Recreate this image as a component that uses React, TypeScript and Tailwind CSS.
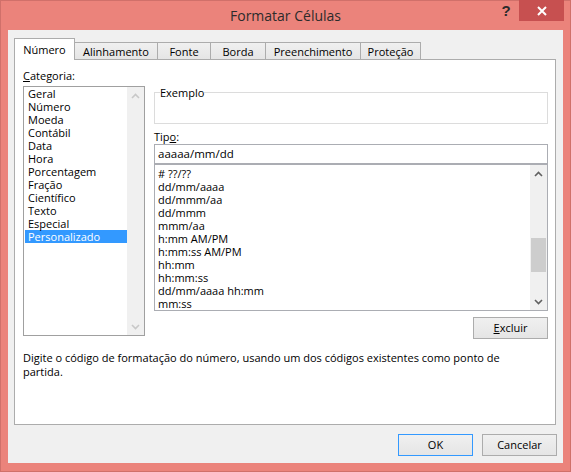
import React from "react";

const CATEGORIES = [
  "Geral",
  "Número",
  "Moeda",
  "Contábil",
  "Data",
  "Hora",
  "Porcentagem",
  "Fração",
  "Científico",
  "Texto",
  "Especial",
  "Personalizado",
];

const FORMATS = [
  "# ??/??",
  "dd/mm/aaaa",
  "dd/mmm/aa",
  "dd/mmm",
  "mmm/aa",
  "h:mm AM/PM",
  "h:mm:ss AM/PM",
  "hh:mm",
  "hh:mm:ss",
  "dd/mm/aaaa hh:mm",
  "mm:ss",
];

const TABS = [
  { label: "Número", w: "w-[61px]" },
  { label: "Alinhamento", w: "w-[84px]" },
  { label: "Fonte", w: "w-[54px]" },
  { label: "Borda", w: "w-[56px]" },
  { label: "Preenchimento", w: "w-[96px]" },
  { label: "Proteção", w: "w-[61px]" },
];

function Chevron({ up, color }: { up?: boolean; color: string }) {
  return (
    <svg width="9" height="6" viewBox="0 0 9 6">
      <polyline
        points={up ? "1,5 4.5,1.5 8,5" : "1,1 4.5,4.5 8,1"}
        fill="none"
        stroke={color}
        strokeWidth="1.6"
      />
    </svg>
  );
}

export default function App() {
  return (
    <div className="relative w-[571px] h-[472px] bg-[#EB837B] border border-[#D0706A] font-['Open_Sans',sans-serif] text-[11px] text-black">
      {/* Title bar */}
      <div className="h-[29px] flex items-center justify-center">
        <span className="text-[14px] text-[#2B2B2B] leading-none">Formatar Células</span>
      </div>
      <div className="absolute top-[-1px] right-[6px] flex">
        <div className="w-[26px] h-[21px] flex items-center justify-center text-[15px] font-bold text-[#2B2B2B] leading-none font-['Liberation_Sans',sans-serif]">
          ?
        </div>
        <div className="w-[45px] h-[21px] bg-[#C75050] flex items-center justify-center">
          <svg width="10" height="10" viewBox="0 0 10 10">
            <path d="M1 1 L9 9 M9 1 L1 9" stroke="white" strokeWidth="2" />
          </svg>
        </div>
      </div>

      {/* Client area */}
      <div className="mx-[7px] h-[433px] bg-[#F0F0F0] pl-[6px] pr-[7px] pt-[8px] flex flex-col">
        {/* Tabs */}
        <div className="flex items-end h-[21px]">
          {TABS.map((t, i) =>
            i === 0 ? (
              <div
                key={t.label}
                className={`${t.w} h-[22px] -mb-px relative z-10 bg-white border border-b-0 border-[#ACACAC] flex items-center justify-center leading-none`}
              >
                {t.label}
              </div>
            ) : (
              <div
                key={t.label}
                className={`${t.w} h-[17px] -ml-px bg-gradient-to-b from-[#F0F0F0] to-[#E5E5E5] border border-b-0 border-[#ACACAC] flex items-center justify-center leading-none`}
              >
                {t.label}
              </div>
            )
          )}
        </div>

        {/* Tab panel */}
        <div className="h-[366px] bg-white border border-[#ACACAC] pl-[8px] pt-[9px] flex flex-col">
          <div className="flex">
            {/* Categoria */}
            <div className="w-[122px] flex flex-col">
              <div className="h-[13px] leading-[13px]">
                <u>C</u>ategoria:
              </div>
              <div className="mt-[4px] h-[250px] border border-[#A0A0A0] flex">
                <div className="flex-1 pl-[1px]">
                  {CATEGORIES.map((c, i) => (
                    <div
                      key={c}
                      className={`h-[13px] leading-[13px] pl-[3px] ${
                        i === CATEGORIES.length - 1 ? "bg-[#3399FF] text-white" : ""
                      }`}
                    >
                      {c}
                    </div>
                  ))}
                </div>
                <div className="w-[17px] bg-[#F0F0F0] flex flex-col justify-between">
                  <div className="h-[17px] flex items-center justify-center">
                    <Chevron up color="#C8C8C8" />
                  </div>
                  <div className="h-[17px] flex items-center justify-center">
                    <Chevron color="#C8C8C8" />
                  </div>
                </div>
              </div>
            </div>

            {/* Right side */}
            <div className="ml-[9px] w-[394px] flex flex-col">
              <fieldset className="mt-[17px] h-[38px] border border-[#DCDCDC] px-[5px]">
                <legend className="leading-[13px] p-0">Exemplo</legend>
              </fieldset>

              <div className="mt-[6px] h-[13px] leading-[13px]">
                Tip<u>o</u>:
              </div>
              <div className="mt-[1px] h-[20px] border border-[#ABADB3] flex items-center pl-[3px] text-[11.5px]">
                aaaaa/mm/dd
              </div>
              <div className="h-[147px] border border-[#ABADB3] flex">
                <div className="flex-1 pt-[2px] pl-[3px] overflow-hidden">
                  {FORMATS.map((f) => (
                    <div key={f} className="h-[13px] leading-[13px] whitespace-nowrap">
                      {f}
                    </div>
                  ))}
                </div>
                <div className="w-[17px] bg-[#F0F0F0] flex flex-col">
                  <div className="h-[17px] flex items-center justify-center">
                    <Chevron up color="#606060" />
                  </div>
                  <div className="flex-1 px-[1px]">
                    <div className="mt-[56px] h-[34px] bg-[#CDCDCD]" />
                  </div>
                  <div className="h-[17px] flex items-center justify-center">
                    <Chevron color="#606060" />
                  </div>
                </div>
              </div>

              <div className="mt-[6px] self-end w-[75px] h-[22px] border border-[#ACACAC] bg-gradient-to-b from-[#F0F0F0] to-[#E5E5E5] flex items-center justify-center">
                <span>
                  <u>E</u>xcluir
                </span>
              </div>
            </div>
          </div>

          <div className="mt-[12px] flex flex-col">
            <div className="h-[14px] leading-[14px] whitespace-nowrap">
              Digite o código de formatação do número, usando um dos códigos existentes como ponto de
            </div>
            <div className="h-[14px] leading-[14px]">partida.</div>
          </div>
        </div>

        {/* Dialog buttons */}
        <div className="mt-[9px] -mr-px flex justify-end gap-[9px]">
          <div className="w-[75px] h-[22px] border border-[#3399FF] bg-gradient-to-b from-[#F0F0F0] to-[#E5E5E5] flex items-center justify-center">
            OK
          </div>
          <div className="w-[75px] h-[22px] border border-[#ACACAC] bg-gradient-to-b from-[#F0F0F0] to-[#E5E5E5] flex items-center justify-center">
            Cancelar
          </div>
        </div>
      </div>
    </div>
  );
}
